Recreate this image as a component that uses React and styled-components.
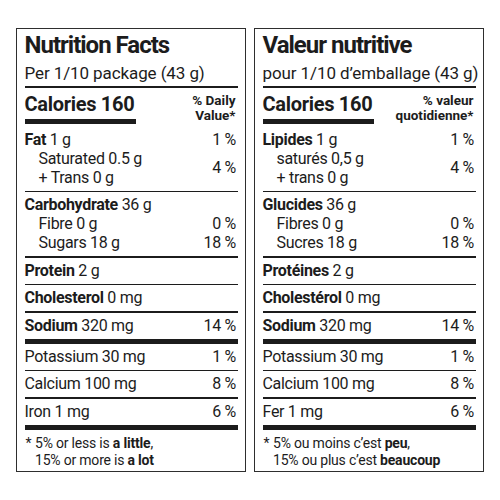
import React from "react";
import styled, { createGlobalStyle } from "styled-components";

const labels = [
  {
    title: "Nutrition Facts",
    serving: "Per 1/10 package (43 g)",
    calories: "Calories 160",
    dv: ["% Daily", "Value*"],
    groups: [
      {
        rows: [
          { bold: "Fat", rest: " 1 g", dv: "1 %" },
          { lines: ["Saturated 0.5 g", "+ Trans 0 g"], dv: "4 %", sub: true },
        ],
      },
      {
        rows: [
          { bold: "Carbohydrate", rest: " 36 g" },
          { rest: "Fibre 0 g", dv: "0 %", sub: true },
          { rest: "Sugars 18 g", dv: "18 %", sub: true },
        ],
      },
      { rows: [{ bold: "Protein", rest: " 2 g" }] },
      { rows: [{ bold: "Cholesterol", rest: " 0 mg" }] },
      { rows: [{ bold: "Sodium", rest: " 320 mg", dv: "14 %" }], thick: true },
      { rows: [{ rest: "Potassium 30 mg", dv: "1 %" }] },
      { rows: [{ rest: "Calcium 100 mg", dv: "8 %" }] },
      { rows: [{ rest: "Iron 1 mg", dv: "6 %" }], thick: true },
    ],
    foot: [
      ["5% or less is ", "a little", ","],
      ["15% or more is ", "a lot", ""],
    ],
  },
  {
    title: "Valeur nutritive",
    serving: "pour 1/10 d’emballage (43 g)",
    calories: "Calories 160",
    dv: ["% valeur", "quotidienne*"],
    groups: [
      {
        rows: [
          { bold: "Lipides", rest: " 1 g", dv: "1 %" },
          { lines: ["saturés 0,5 g", "+ trans 0 g"], dv: "4 %", sub: true },
        ],
      },
      {
        rows: [
          { bold: "Glucides", rest: " 36 g" },
          { rest: "Fibres 0 g", dv: "0 %", sub: true },
          { rest: "Sucres 18 g", dv: "18 %", sub: true },
        ],
      },
      { rows: [{ bold: "Protéines", rest: " 2 g" }] },
      { rows: [{ bold: "Cholestérol", rest: " 0 mg" }] },
      { rows: [{ bold: "Sodium", rest: " 320 mg", dv: "14 %" }], thick: true },
      { rows: [{ rest: "Potassium 30 mg", dv: "1 %" }] },
      { rows: [{ rest: "Calcium 100 mg", dv: "8 %" }] },
      { rows: [{ rest: "Fer 1 mg", dv: "6 %" }], thick: true },
    ],
    foot: [
      ["5% ou moins c’est ", "peu", ","],
      ["15% ou plus c’est ", "beaucoup", ""],
    ],
  },
];

const Label = ({ data }) => (
  <Panel>
    <Title>{data.title}</Title>
    <Serving>{data.serving}</Serving>
    <Rule />
    <CaloriesRow>
      <Calories>{data.calories}</Calories>
      <DvHead>
        {data.dv[0]}
        <br />
        {data.dv[1]}
      </DvHead>
    </CaloriesRow>
    {data.groups.map((g, i) => (
      <React.Fragment key={i}>
        <Group>
          {g.rows.map((r, j) => (
            <Row key={j} $sub={r.sub}>
              {r.lines ? (
                <span>
                  {r.lines[0]}
                  <br />
                  {r.lines[1]}
                </span>
              ) : (
                <span>
                  {r.bold && <b>{r.bold}</b>}
                  {r.rest}
                </span>
              )}
              {r.dv && <span>{r.dv}</span>}
            </Row>
          ))}
        </Group>
        <Rule $thick={g.thick} />
      </React.Fragment>
    ))}
    <Foot>
      <Star>*</Star>
      <div>
        {data.foot.map((l, i) => (
          <div key={i}>
            {l[0]}
            <b>{l[1]}</b>
            {l[2]}
          </div>
        ))}
      </div>
    </Foot>
  </Panel>
);

const App = () => (
  <>
    <GlobalStyle />
    <Page>
      {labels.map((l, i) => (
        <Label key={i} data={l} />
      ))}
    </Page>
  </>
);

const GlobalStyle = createGlobalStyle`
  body {
    margin: 0;
    background: #fff;
    color: #1c1c1c;
    font-family: Roboto, "Liberation Sans", Arial, sans-serif;
  }
`;

const Page = styled.div`
  display: flex;
  gap: 8px;
  padding: 28px 0 0 16px;
`;

const Panel = styled.div`
  width: 230px;
  box-sizing: border-box;
  border: 1.5px solid #2e2e2e;
  padding: 2px 7.5px 2px;
`;

const Title = styled.div`
  font-size: 24px;
  font-weight: bold;
  line-height: 28px;
  letter-spacing: -1px;
`;

const Serving = styled.div`
  font-size: 17px;
  line-height: 22px;
  letter-spacing: -0.1px;
  margin-top: 2.5px;
  padding-bottom: 2.5px;
  white-space: nowrap;
`;

const Rule = styled.div`
  height: ${(p) => (p.$thick ? "5px" : "1.5px")};
  background: #1c1c1c;
`;

const CaloriesRow = styled.div`
  display: flex;
  justify-content: space-between;
  align-items: flex-start;
  padding: 4.4px 0 2.6px;
`;

const Calories = styled.div`
  font-size: 20px;
  font-weight: bold;
  line-height: 24px;
  letter-spacing: -0.3px;
  width: 111px;
  padding-bottom: 3.5px;
  border-bottom: 5.5px solid #1c1c1c;
  white-space: nowrap;
`;

const DvHead = styled.div`
  font-size: 13.5px;
  font-weight: bold;
  line-height: 15px;
  text-align: right;
  padding: 1.2px 2px 0 0;
`;

const Group = styled.div`
  padding: 2.8px 0 4.2px;
`;

const Row = styled.div`
  display: flex;
  justify-content: space-between;
  align-items: center;
  font-size: 16px;
  line-height: 19px;
  letter-spacing: -0.3px;
  padding-left: ${(p) => (p.$sub ? "14px" : "0")};
  padding-right: 1.5px;
`;

const Foot = styled.div`
  display: flex;
  font-size: 14px;
  line-height: 17px;
  letter-spacing: -0.2px;
  padding-top: 5px;
`;

const Star = styled.span`
  width: 9.5px;
  padding-left: 1px;
`;

export default App;
